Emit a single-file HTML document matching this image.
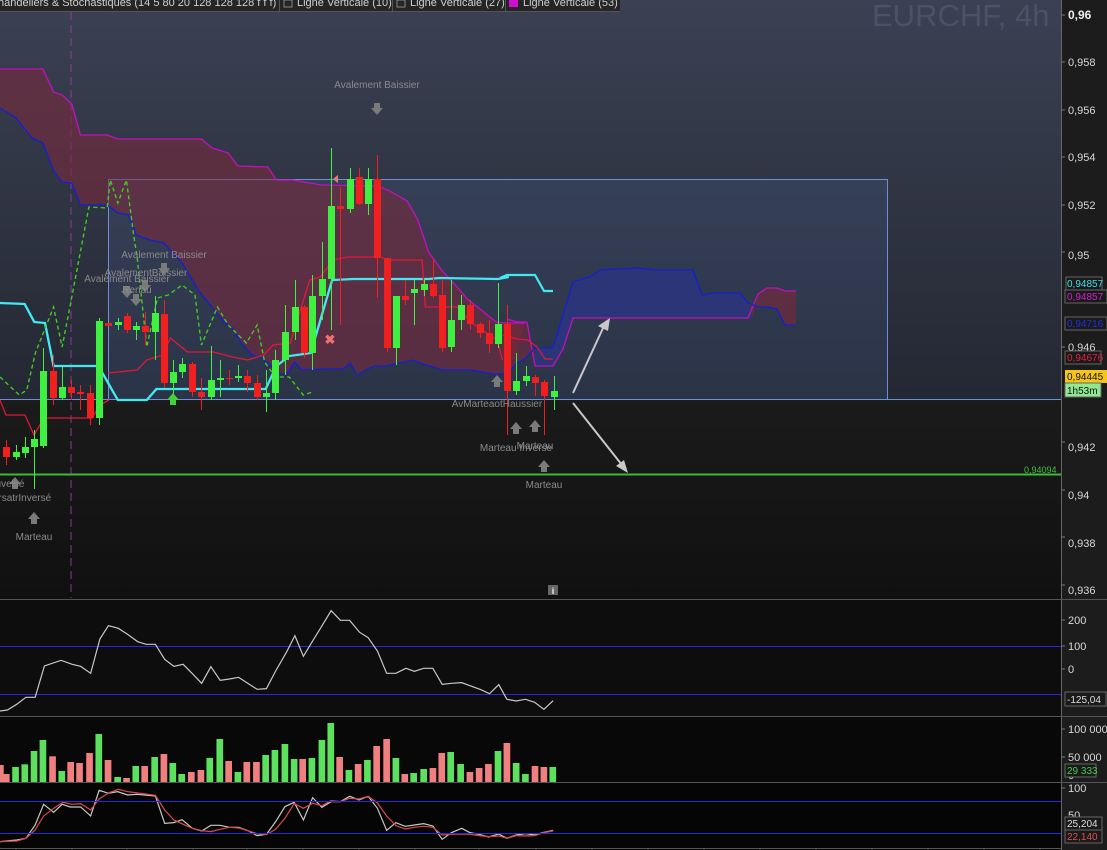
<!DOCTYPE html>
<html><head><meta charset="utf-8"><style>
html,body{margin:0;padding:0;background:#111;}
body{width:1107px;height:850px;overflow:hidden;position:relative;font-family:"Liberation Sans",Arial,sans-serif;}
svg{position:absolute;left:0;top:0}
text{font-family:"Liberation Sans",Arial,sans-serif}
</style></head><body>
<svg width="1107" height="850" viewBox="0 0 1107 850" xmlns="http://www.w3.org/2000/svg">
<defs>
<linearGradient id="bgTop" x1="0" y1="0" x2="0" y2="1">
<stop offset="0" stop-color="#3b4153"/><stop offset="1" stop-color="#242833"/></linearGradient>
<linearGradient id="bgBot" x1="0" y1="0" x2="0" y2="1">
<stop offset="0" stop-color="#1b1b1b"/><stop offset="1" stop-color="#101010"/></linearGradient>
</defs>
<rect x="0" y="0" width="1061" height="399" fill="url(#bgTop)"/>
<rect x="0" y="399" width="1061" height="200" fill="url(#bgBot)"/>
<rect x="0" y="599" width="1061" height="117" fill="#0d0d0d"/>
<rect x="0" y="716" width="1061" height="66" fill="#080808"/>
<rect x="0" y="782" width="1061" height="68" fill="#050505"/>
<rect x="1061" y="0" width="46" height="850" fill="#1c1c1c"/>
<line x1="1061.5" y1="0" x2="1061.5" y2="850" stroke="#666"/>
<text x="872" y="26" font-size="31" fill="#4c5265">EURCHF, 4h</text>
<rect x="108.5" y="179.5" width="779" height="220" fill="rgba(90,130,210,0.13)" stroke="#6d8fd8"/>
<line x1="0" y1="399.5" x2="1061" y2="399.5" stroke="#6d8fd8"/>
<line x1="71" y1="12" x2="71" y2="598" stroke="#9a3aa8" stroke-width="0.9" stroke-dasharray="8,5"/>

<g transform="scale(1.0714,1)">
<polygon fill="rgba(125,40,60,0.55)" points="0,69 40,69 50,92 58,95 67,104 75,135 100,135 110,139 188,139 198,148 213,153 222,166 250,167 258,180 273,180 300,185 352,186 362,190 380,201 390,220 400,252 412,270 425,285 437,300 447,308 463,322 470,323 490,323 475,374 460,374 440,370 413,370 395,364 385,360 360,366 350,366 345,368 333,375 327,363 320,369 300,369 282,370 275,362 268,374 262,374 257,370 245,358 235,355 225,343 217,328 210,323 200,310 185,290 170,263 153,243 140,240 127,235 120,215 110,213 100,205 83,205 75,205 67,183 58,182 50,171 40,143 30,138 15,118 0,108"/>
</g>
<polygon fill="rgba(125,40,60,0.55)" points="507,319 517,322 527,322 535,366 535,348 525,359 517,363 507,374"/>
<polygon fill="#2c3578" points="535,348 553,348 573,282 590,277 600,270 637,268 657,270 693,270 702,295 713,293 740,293 748,303 752,318 573,318 563,349 553,366 535,366"/>
<polygon fill="rgba(125,40,60,0.6)" points="752,318 758,294 767,288 777,288 785,291 796,291 796,325 785,325 777,309 767,307 758,307 750,304"/>

<g transform="scale(1.0714,1)" fill="none" stroke-width="1.3">
<polyline stroke="#c010c0" points="0,69 40,69 50,92 58,95 67,104 75,135 100,135 110,139 188,139 198,148 213,153 222,166 250,167 258,180 273,180 300,185 352,186 362,190 380,201 390,220 400,252 412,270 425,285 437,300 447,308 463,322 470,323 490,323"/>
<polyline stroke="#1420d0" points="0,108 15,118 30,138 40,143 50,171 58,182 67,183 75,205 83,205 100,205 110,213 120,215 127,235 140,240 153,243 170,263 185,290 200,310 210,323 217,328 225,343 235,355 245,358 257,370 262,374 268,374 275,362 282,370 300,369 320,369 327,363 333,375 345,368 350,366 360,366 385,360 395,364 413,370 440,370 460,374 475,374"/>
<polyline stroke="#43e8f0" stroke-width="2.2" points="0,303 23,304 32,322 42,323 50,366 92,366 103,387 110,400 137,400 146,389 248,389 258,366 270,356 290,353 310,280 330,279 400,279 410,278 465,279 475,277"/>
<polyline stroke="#e01838" points="101,373 110,372 128,370 137,360 152,355 159,338 175,352 199,352 217,357 231,360 246,355 255,345 271,343 289,280 299,277 311,260 324,257 355,257 361,260 394,260 397,307 427,307 439,322 464,340 469,360"/>
<polyline stroke="#44cc22" stroke-dasharray="4,3" points="0,377 18,395 25,390 33,353 50,307 58,347 67,297 83,207 100,208 103,180 110,203 118,180 125,237 128,257 137,347 147,298 157,295 170,285 182,295 188,345 203,307 213,325 230,343 240,325 247,362 257,377 270,377 283,395 292,392"/>
</g>
<polyline fill="none" stroke="#e01838" stroke-width="1.3" points="0,400 6,415 25,415 34,435 44,418 92,418 100,405 109,400"/>
<g fill="none" stroke-width="1.3">
<polyline stroke="#c010c0" points="507,319 517,322 527,322 535,366 553,366 563,349 573,318 748,318 758,294 767,288 777,288 785,291 796,291"/>
<polyline stroke="#1420d0" points="500,374 507,374 517,363 525,359 535,348 553,348 573,282 590,277 600,270 637,268 657,270 693,270 702,295 713,293 740,293 748,303 758,307 767,307 777,309 785,325 796,325"/>
<polyline stroke="#43e8f0" stroke-width="2.2" points="500,278 507,275 535,275 544,291 553,291"/>
<polyline stroke="#e01838" points="503,335 517,339 528,340 537,347 545,359 553,359"/>
</g>

<line x1="0" y1="474.5" x2="1061" y2="474.5" stroke="#3cb83c" stroke-width="2"/>
<text x="1024" y="473" font-size="9" fill="#40c040">0,94094</text>

<g stroke-width="1">
<line x1="6.5" y1="440" x2="6.5" y2="465" stroke="#f02020"/><rect x="3" y="447" width="7" height="10" fill="#f02020"/>
<line x1="16.5" y1="445" x2="16.5" y2="460" stroke="#40f040"/><rect x="13" y="452" width="7" height="5" fill="#40f040"/>
<line x1="25.5" y1="437" x2="25.5" y2="458" stroke="#40f040"/><rect x="22" y="447" width="7" height="6" fill="#40f040"/>
<line x1="34.5" y1="430" x2="34.5" y2="489" stroke="#40f040"/><rect x="31" y="439" width="7" height="8" fill="#40f040"/>
<line x1="43.5" y1="348" x2="43.5" y2="448" stroke="#40f040"/><rect x="40" y="371" width="7" height="75" fill="#40f040"/>
<line x1="53.5" y1="355" x2="53.5" y2="405" stroke="#f02020"/><rect x="50" y="371" width="7" height="27" fill="#f02020"/>
<line x1="62.5" y1="367" x2="62.5" y2="400" stroke="#40f040"/><rect x="59" y="387" width="7" height="11" fill="#40f040"/>
<line x1="71.5" y1="380" x2="71.5" y2="400" stroke="#f02020"/><rect x="68" y="387" width="7" height="6" fill="#f02020"/>
<line x1="80.5" y1="385" x2="80.5" y2="410" stroke="#f02020"/><rect x="77" y="392" width="7" height="2" fill="#f02020"/>
<line x1="90.5" y1="385" x2="90.5" y2="425" stroke="#f02020"/><rect x="87" y="393" width="7" height="25" fill="#f02020"/>
<line x1="99.5" y1="318" x2="99.5" y2="425" stroke="#40f040"/><rect x="96" y="321" width="7" height="97" fill="#40f040"/>
<rect x="105" y="323" width="7" height="3" fill="#f02020"/>
<line x1="118.5" y1="318" x2="118.5" y2="330" stroke="#40f040"/><rect x="115" y="322" width="7" height="3" fill="#40f040"/>
<line x1="127.5" y1="313" x2="127.5" y2="333" stroke="#f02020"/><rect x="124" y="316" width="7" height="14" fill="#f02020"/>
<line x1="136.5" y1="322" x2="136.5" y2="340" stroke="#40f040"/><rect x="133" y="326" width="7" height="4" fill="#40f040"/>
<line x1="145.5" y1="312" x2="145.5" y2="345" stroke="#f02020"/><rect x="142" y="326" width="7" height="6" fill="#f02020"/>
<line x1="155.5" y1="296" x2="155.5" y2="360" stroke="#40f040"/><rect x="152" y="313" width="7" height="19" fill="#40f040"/>
<line x1="164.5" y1="300" x2="164.5" y2="388" stroke="#f02020"/><rect x="161" y="314" width="7" height="69" fill="#f02020"/>
<line x1="173.5" y1="360" x2="173.5" y2="395" stroke="#40f040"/><rect x="170" y="372" width="7" height="11" fill="#40f040"/>
<line x1="182.5" y1="358" x2="182.5" y2="378" stroke="#40f040"/><rect x="179" y="364" width="7" height="8" fill="#40f040"/>
<line x1="192.5" y1="362" x2="192.5" y2="397" stroke="#f02020"/><rect x="189" y="364" width="7" height="28" fill="#f02020"/>
<line x1="201.5" y1="378" x2="201.5" y2="410" stroke="#f02020"/><rect x="198" y="392" width="7" height="5" fill="#f02020"/>
<line x1="211.5" y1="346" x2="211.5" y2="400" stroke="#40f040"/><rect x="208" y="380" width="7" height="17" fill="#40f040"/>
<line x1="220.5" y1="360" x2="220.5" y2="397" stroke="#40f040"/><rect x="217" y="378" width="7" height="2" fill="#40f040"/>
<line x1="229.5" y1="370" x2="229.5" y2="385" stroke="#f02020"/><rect x="226" y="378" width="7" height="1" fill="#f02020"/>
<line x1="238.5" y1="365" x2="238.5" y2="382" stroke="#40f040"/><rect x="235" y="376" width="7" height="2" fill="#40f040"/>
<line x1="247.5" y1="370" x2="247.5" y2="392" stroke="#f02020"/><rect x="244" y="376" width="7" height="7" fill="#f02020"/>
<line x1="257.5" y1="375" x2="257.5" y2="400" stroke="#f02020"/><rect x="254" y="383" width="7" height="14" fill="#f02020"/>
<line x1="266.5" y1="370" x2="266.5" y2="412" stroke="#40f040"/><rect x="263" y="393" width="7" height="4" fill="#40f040"/>
<line x1="275.5" y1="350" x2="275.5" y2="400" stroke="#40f040"/><rect x="272" y="360" width="7" height="33" fill="#40f040"/>
<line x1="285.5" y1="305" x2="285.5" y2="375" stroke="#40f040"/><rect x="282" y="332" width="7" height="28" fill="#40f040"/>
<line x1="295.5" y1="280" x2="295.5" y2="340" stroke="#40f040"/><rect x="292" y="307" width="7" height="25" fill="#40f040"/>
<line x1="304.5" y1="305" x2="304.5" y2="358" stroke="#f02020"/><rect x="301" y="307" width="7" height="46" fill="#f02020"/>
<line x1="312.5" y1="275" x2="312.5" y2="370" stroke="#40f040"/><rect x="309" y="296" width="7" height="57" fill="#40f040"/>
<line x1="322.5" y1="242" x2="322.5" y2="320" stroke="#40f040"/><rect x="319" y="279" width="7" height="17" fill="#40f040"/>
<line x1="331.5" y1="148" x2="331.5" y2="330" stroke="#40f040"/><rect x="328" y="206" width="7" height="73" fill="#40f040"/>
<line x1="340.5" y1="187" x2="340.5" y2="325" stroke="#f02020"/><rect x="337" y="206" width="7" height="3" fill="#f02020"/>
<line x1="350.5" y1="168" x2="350.5" y2="213" stroke="#40f040"/><rect x="347" y="179" width="7" height="30" fill="#40f040"/>
<line x1="359.5" y1="168" x2="359.5" y2="205" stroke="#f02020"/><rect x="356" y="177" width="7" height="27" fill="#f02020"/>
<line x1="368.5" y1="168" x2="368.5" y2="215" stroke="#40f040"/><rect x="365" y="179" width="7" height="25" fill="#40f040"/>
<line x1="377.5" y1="155" x2="377.5" y2="298" stroke="#f02020"/><rect x="374" y="179" width="7" height="79" fill="#f02020"/>
<line x1="387.5" y1="258" x2="387.5" y2="352" stroke="#f02020"/><rect x="384" y="258" width="7" height="90" fill="#f02020"/>
<line x1="396.5" y1="296" x2="396.5" y2="365" stroke="#40f040"/><rect x="393" y="296" width="7" height="52" fill="#40f040"/>
<line x1="405.5" y1="280" x2="405.5" y2="305" stroke="#f02020"/><rect x="402" y="296" width="7" height="4" fill="#f02020"/>
<line x1="414.5" y1="280" x2="414.5" y2="325" stroke="#40f040"/><rect x="411" y="289" width="7" height="4" fill="#40f040"/>
<line x1="424.5" y1="278" x2="424.5" y2="296" stroke="#40f040"/><rect x="421" y="284" width="7" height="6" fill="#40f040"/>
<line x1="433.5" y1="258" x2="433.5" y2="298" stroke="#f02020"/><rect x="430" y="284" width="7" height="12" fill="#f02020"/>
<line x1="442.5" y1="280" x2="442.5" y2="352" stroke="#f02020"/><rect x="439" y="295" width="7" height="53" fill="#f02020"/>
<line x1="451.5" y1="280" x2="451.5" y2="352" stroke="#40f040"/><rect x="448" y="320" width="7" height="27" fill="#40f040"/>
<line x1="461.5" y1="295" x2="461.5" y2="330" stroke="#40f040"/><rect x="458" y="305" width="7" height="15" fill="#40f040"/>
<line x1="470.5" y1="300" x2="470.5" y2="330" stroke="#f02020"/><rect x="467" y="305" width="7" height="19" fill="#f02020"/>
<line x1="480.5" y1="322" x2="480.5" y2="338" stroke="#f02020"/><rect x="477" y="324" width="7" height="9" fill="#f02020"/>
<line x1="489.5" y1="320" x2="489.5" y2="353" stroke="#f02020"/><rect x="486" y="333" width="7" height="11" fill="#f02020"/>
<line x1="498.5" y1="283" x2="498.5" y2="348" stroke="#40f040"/><rect x="495" y="324" width="7" height="20" fill="#40f040"/>
<line x1="507.5" y1="305" x2="507.5" y2="435" stroke="#f02020"/><rect x="504" y="324" width="7" height="67" fill="#f02020"/>
<line x1="516.5" y1="353" x2="516.5" y2="395" stroke="#40f040"/><rect x="513" y="381" width="7" height="10" fill="#40f040"/>
<line x1="526.5" y1="366" x2="526.5" y2="386" stroke="#40f040"/><rect x="523" y="376" width="7" height="5" fill="#40f040"/>
<line x1="535.5" y1="375" x2="535.5" y2="396" stroke="#f02020"/><rect x="532" y="377" width="7" height="6" fill="#f02020"/>
<line x1="544.5" y1="380" x2="544.5" y2="435" stroke="#f02020"/><rect x="541" y="382" width="7" height="14" fill="#f02020"/>
<line x1="554.5" y1="376" x2="554.5" y2="410" stroke="#40f040"/><rect x="551" y="391" width="7" height="6" fill="#40f040"/>
</g>

<text x="330" y="344" font-size="13" font-weight="bold" fill="#f07070" text-anchor="middle">✖</text>
<polygon points="333,179 338,175 338,183" fill="#f07878"/>
<g fill="#7a7a7a">
<path d="M374,103h6v5h3l-6,7l-6,-7h3z"/>
<path d="M161,263h6v5h3l-6,7l-6,-7h3z"/>
<path d="M142,280h6v5h3l-6,7l-6,-7h3z"/>
<path d="M124,286h6v5h3l-6,7l-6,-7h3z"/>
<path d="M133,294h6v5h3l-6,7l-6,-7h3z"/>
<path d="M494,387h6v-5h3l-6,-7l-6,7h3z"/>
<path d="M513,434h6v-5h3l-6,-7l-6,7h3z"/>
<path d="M532,432h6v-5h3l-6,-7l-6,7h3z"/>
<path d="M541,472h6v-5h3l-6,-7l-6,7h3z"/>
<path d="M12,489h6v-5h3l-6,-7l-6,7h3z"/>
<path d="M31,524h6v-5h3l-6,-7l-6,7h3z"/>
</g>
<path d="M170,405h6v-5h3l-6,-7l-6,7h3z" fill="#40d040"/>
<g font-size="10" fill="#8a8a8a" text-anchor="middle">
<text x="377" y="88">Avalement Baissier</text>
<text x="164" y="258">Avalement Baissier</text>
<text x="146" y="276">AvalementBaissier</text>
<text x="127" y="282">Avalement Baissier</text>
<text x="137" y="293">Renau</text>
<text x="497" y="407">AvMarteaotHaussier</text>
<text x="516" y="451">Marteau Inverse</text>
<text x="535" y="449">Marteau</text>
<text x="544" y="488">Marteau</text>
<text x="10" y="487">uvelsé</text>
<text x="22" y="501">érsatrInversé</text>
<text x="34" y="540">Marteau</text>
</g>
<rect x="548" y="585" width="10" height="10" fill="#666"/>
<text x="553" y="594" font-size="9" font-weight="bold" fill="#eee" text-anchor="middle">i</text>
<g stroke="#c8c8c8" stroke-width="2" fill="#c8c8c8">
<line x1="573" y1="393" x2="604" y2="326"/>
<polygon points="610,318 598,326 608,331" stroke="none"/>
<line x1="573" y1="403" x2="622" y2="465"/>
<polygon points="628,473 616,466 624,460" stroke="none"/>
</g>

<line x1="0" y1="599.5" x2="1107" y2="599.5" stroke="#555"/>
<line x1="0" y1="716.5" x2="1107" y2="716.5" stroke="#555"/>
<line x1="0" y1="782.5" x2="1107" y2="782.5" stroke="#555"/>
<line x1="0" y1="848.5" x2="1061" y2="848.5" stroke="#555"/>

<line x1="0" y1="646.5" x2="1061" y2="646.5" stroke="#2828e0"/>
<line x1="0" y1="694.5" x2="1061" y2="694.5" stroke="#2828e0"/>
<g transform="translate(0,595) scale(0.37,0.3333)">
<polyline fill="none" stroke="#c8c8c8" stroke-width="1.2" vector-effect="non-scaling-stroke" points="0,348 20,345 45,328 70,307 95,307 120,213 165,196 195,208 218,214 245,235 270,132 293,92 320,100 345,118 372,140 395,148 420,148 445,193 470,214 495,208 520,236 545,265 570,215 595,256 620,252 645,247 670,265 695,283 720,281 745,228 775,170 797,122 820,184 845,138 870,93 895,47 920,76 945,76 972,112 995,128 1020,168 1045,235 1070,235 1097,220 1120,229 1145,220 1170,220 1195,268 1220,265 1248,263 1270,272 1300,284 1323,296 1348,269 1370,313 1395,318 1420,313 1445,322 1470,343 1495,317"/>
<g>
<rect x="-8" y="510" width="18" height="51" fill="#f08080"/>
<rect x="8" y="537" width="18" height="24" fill="#f08080"/>
<rect x="33" y="516" width="18" height="45" fill="#5de05d"/>
<rect x="58" y="508" width="18" height="53" fill="#5de05d"/>
<rect x="83" y="468" width="18" height="93" fill="#5de05d"/>
<rect x="107" y="435" width="18" height="126" fill="#5de05d"/>
<rect x="133" y="484" width="18" height="77" fill="#f08080"/>
<rect x="158" y="528" width="18" height="33" fill="#5de05d"/>
<rect x="182" y="501" width="18" height="60" fill="#f08080"/>
<rect x="206" y="504" width="18" height="57" fill="#f08080"/>
<rect x="233" y="474" width="18" height="87" fill="#f08080"/>
<rect x="258" y="417" width="18" height="144" fill="#5de05d"/>
<rect x="283" y="495" width="18" height="66" fill="#f08080"/>
<rect x="309" y="546" width="18" height="15" fill="#5de05d"/>
<rect x="333" y="549" width="18" height="12" fill="#f08080"/>
<rect x="358" y="513" width="18" height="48" fill="#5de05d"/>
<rect x="382" y="513" width="18" height="48" fill="#f08080"/>
<rect x="409" y="486" width="18" height="75" fill="#5de05d"/>
<rect x="434" y="477" width="18" height="84" fill="#f08080"/>
<rect x="458" y="504" width="18" height="57" fill="#5de05d"/>
<rect x="482" y="537" width="18" height="24" fill="#5de05d"/>
<rect x="508" y="531" width="18" height="30" fill="#f08080"/>
<rect x="534" y="525" width="18" height="36" fill="#f08080"/>
<rect x="558" y="489" width="18" height="72" fill="#5de05d"/>
<rect x="585" y="432" width="18" height="129" fill="#5de05d"/>
<rect x="609" y="498" width="18" height="63" fill="#f08080"/>
<rect x="634" y="531" width="18" height="30" fill="#5de05d"/>
<rect x="658" y="501" width="18" height="60" fill="#f08080"/>
<rect x="684" y="501" width="18" height="60" fill="#f08080"/>
<rect x="709" y="480" width="18" height="81" fill="#5de05d"/>
<rect x="734" y="465" width="18" height="96" fill="#5de05d"/>
<rect x="761" y="447" width="18" height="114" fill="#5de05d"/>
<rect x="786" y="492" width="18" height="69" fill="#5de05d"/>
<rect x="809" y="492" width="18" height="69" fill="#f08080"/>
<rect x="834" y="489" width="18" height="72" fill="#5de05d"/>
<rect x="861" y="435" width="18" height="126" fill="#5de05d"/>
<rect x="885" y="384" width="18" height="177" fill="#5de05d"/>
<rect x="909" y="486" width="18" height="75" fill="#f08080"/>
<rect x="934" y="525" width="18" height="36" fill="#5de05d"/>
<rect x="959" y="507" width="18" height="54" fill="#f08080"/>
<rect x="984" y="495" width="18" height="66" fill="#5de05d"/>
<rect x="1009" y="453" width="18" height="108" fill="#f08080"/>
<rect x="1036" y="432" width="18" height="129" fill="#f08080"/>
<rect x="1061" y="489" width="18" height="72" fill="#5de05d"/>
<rect x="1085" y="537" width="18" height="24" fill="#f08080"/>
<rect x="1109" y="534" width="18" height="27" fill="#5de05d"/>
<rect x="1136" y="522" width="18" height="39" fill="#5de05d"/>
<rect x="1161" y="519" width="18" height="42" fill="#f08080"/>
<rect x="1185" y="474" width="18" height="87" fill="#f08080"/>
<rect x="1209" y="471" width="18" height="90" fill="#5de05d"/>
<rect x="1236" y="507" width="18" height="54" fill="#5de05d"/>
<rect x="1261" y="531" width="18" height="30" fill="#f08080"/>
<rect x="1286" y="519" width="18" height="42" fill="#f08080"/>
<rect x="1311" y="507" width="18" height="54" fill="#f08080"/>
<rect x="1337" y="468" width="18" height="93" fill="#5de05d"/>
<rect x="1361" y="444" width="18" height="117" fill="#f08080"/>
<rect x="1386" y="504" width="18" height="57" fill="#5de05d"/>
<rect x="1411" y="537" width="18" height="24" fill="#5de05d"/>
<rect x="1437" y="513" width="18" height="48" fill="#f08080"/>
<rect x="1461" y="516" width="18" height="45" fill="#f08080"/>
<rect x="1485" y="516" width="18" height="45" fill="#5de05d"/>
</g>
<polyline fill="none" stroke="#c8c8c8" stroke-width="1.2" vector-effect="non-scaling-stroke" points="0,740 45,735 70,730 95,690 118,628 145,652 168,628 190,636 218,636 245,663 268,586 293,595 318,590 345,600 370,598 420,603 445,685 470,683 492,674 520,700 545,708 570,691 595,691 620,697 645,697 670,707 695,722 720,718 745,680 770,635 795,622 820,675 845,608 870,637 895,620 920,620 945,604 970,615 995,604 1020,640 1045,706 1070,683 1095,694 1120,690 1145,686 1170,693 1195,733 1220,713 1248,700 1270,713 1295,718 1320,726 1348,717 1370,730 1395,720 1420,716 1445,720 1470,712 1495,706"/>
<polyline fill="none" stroke="#d84a4a" stroke-width="1.2" vector-effect="non-scaling-stroke" points="0,740 45,738 70,730 95,705 118,663 145,640 170,622 195,628 218,626 245,645 268,612 295,593 320,583 345,590 420,601 445,645 470,675 495,688 520,700 545,707 570,710 595,703 620,697 645,699 670,707 695,716 720,719 745,703 770,670 795,626 820,640 845,625 870,632 895,617 920,620 945,610 970,612 995,604 1020,624 1045,663 1070,692 1095,702 1120,697 1145,694 1170,697 1195,720 1220,718 1248,717 1270,718 1295,722 1320,725 1348,723 1370,730 1395,722 1420,723 1445,722 1470,713 1495,708"/>
</g>
<line x1="0" y1="801.5" x2="1061" y2="801.5" stroke="#2828e0"/>
<line x1="0" y1="833.5" x2="1061" y2="833.5" stroke="#2828e0"/>

<rect x="0" y="0" width="620" height="11" fill="#252525"/>
<line x1="0" y1="11.5" x2="620" y2="11.5" stroke="#555"/>
<g font-size="11" fill="#cfcfcf">
<text x="-2" y="6">handeliers &amp; Stochastiques (14 5 80 20 128 128 128 f f f)</text>
<line x1="279.5" y1="0" x2="279.5" y2="11" stroke="#555"/>
<rect x="284" y="0" width="8" height="7" fill="none" stroke="#888"/>
<text x="297" y="6">Ligne Verticale (10)</text>
<line x1="392.5" y1="0" x2="392.5" y2="11" stroke="#555"/>
<rect x="397" y="0" width="8" height="7" fill="none" stroke="#888"/>
<text x="410" y="6">Ligne Verticale (27)</text>
<line x1="505.5" y1="0" x2="505.5" y2="11" stroke="#555"/>
<rect x="509" y="0" width="9" height="7" fill="#d010d0"/>
<text x="523" y="6">Ligne Verticale (53)</text>
</g>

<g font-size="11" fill="#d8d8d8">
<g stroke="#777"><line x1="1061" y1="15" x2="1065" y2="15"/><line x1="1061" y1="62" x2="1065" y2="62"/><line x1="1061" y1="110" x2="1065" y2="110"/><line x1="1061" y1="157" x2="1065" y2="157"/><line x1="1061" y1="205" x2="1065" y2="205"/><line x1="1061" y1="252" x2="1065" y2="252"/><line x1="1061" y1="347" x2="1065" y2="347"/><line x1="1061" y1="442" x2="1065" y2="442"/><line x1="1061" y1="490" x2="1065" y2="490"/><line x1="1061" y1="537" x2="1065" y2="537"/><line x1="1061" y1="585" x2="1065" y2="585"/>
<line x1="1061" y1="620" x2="1065" y2="620"/><line x1="1061" y1="646" x2="1065" y2="646"/><line x1="1061" y1="669" x2="1065" y2="669"/><line x1="1061" y1="729" x2="1065" y2="729"/><line x1="1061" y1="757" x2="1065" y2="757"/><line x1="1061" y1="788" x2="1065" y2="788"/></g>
<text x="1068" y="19" font-weight="bold" font-size="12" fill="#eee">0,96</text>
<text x="1068" y="66">0,958</text>
<text x="1068" y="114">0,956</text>
<text x="1068" y="161">0,954</text>
<text x="1068" y="209">0,952</text>
<text x="1068" y="259">0,95</text>
<text x="1068" y="351">0,946</text>
<text x="1068" y="451">0,942</text>
<text x="1068" y="499">0,94</text>
<text x="1068" y="547">0,938</text>
<text x="1068" y="594">0,936</text>
<text x="1068" y="624">200</text>
<text x="1068" y="650">100</text>
<text x="1068" y="673">0</text>
<text x="1068" y="733">100 000</text>
<text x="1068" y="761">50 000</text>
<text x="1068" y="779">0</text>
<text x="1068" y="792">100</text>
<text x="1068" y="819">50</text>
</g>
<g font-size="10">
<rect x="1066" y="277" width="36" height="13" fill="#1a1a1a" stroke="#666"/><text x="1067" y="287" fill="#40e0e8">0,94857</text>
<rect x="1065" y="290" width="42" height="13" fill="#1a1a1a" stroke="#666"/><text x="1067" y="300" fill="#d020d0">0,94857</text>
<rect x="1065" y="317" width="42" height="13" fill="#1a1a1a" stroke="#666"/><text x="1067" y="327" fill="#2030e0">0,94716</text>
<rect x="1065" y="351" width="36" height="13" fill="#1a1a1a" stroke="#666"/><text x="1067" y="361" fill="#e02040">0,94676</text>
<rect x="1065" y="370" width="42" height="13" fill="#f5c518"/><text x="1067" y="380" fill="#111">0,94445</text>
<rect x="1065" y="383" width="36" height="14" fill="#90e890" stroke="#666"/><text x="1067" y="394" fill="#111">1h53m</text>
<rect x="1065" y="692" width="41" height="14" fill="#1a1a1a" stroke="#666"/><text x="1067" y="703" fill="#ddd">-125,04</text>
<rect x="1065" y="764" width="31" height="13" fill="#1a1a1a" stroke="#666"/><text x="1067" y="774" fill="#40d040">29 333</text>
<rect x="1065" y="817" width="37" height="13" fill="#1a1a1a" stroke="#666"/><text x="1067" y="827" fill="#ddd">25,204</text>
<rect x="1065" y="830" width="37" height="13" fill="#1a1a1a" stroke="#666"/><text x="1067" y="840" fill="#e05050">22,140</text>
</g>
<g stroke="#555"><line x1="16" y1="848" x2="16" y2="850"/><line x1="72" y1="848" x2="72" y2="850"/><line x1="127" y1="848" x2="127" y2="850"/><line x1="193" y1="848" x2="193" y2="850"/><line x1="247" y1="848" x2="247" y2="850"/><line x1="303" y1="848" x2="303" y2="850"/><line x1="359" y1="848" x2="359" y2="850"/><line x1="415" y1="848" x2="415" y2="850"/><line x1="479" y1="848" x2="479" y2="850"/><line x1="536" y1="848" x2="536" y2="850"/><line x1="592" y1="848" x2="592" y2="850"/><line x1="648" y1="848" x2="648" y2="850"/><line x1="704" y1="848" x2="704" y2="850"/><line x1="760" y1="848" x2="760" y2="850"/><line x1="816" y1="848" x2="816" y2="850"/><line x1="872" y1="848" x2="872" y2="850"/><line x1="928" y1="848" x2="928" y2="850"/><line x1="984" y1="848" x2="984" y2="850"/><line x1="1040" y1="848" x2="1040" y2="850"/></g>
</svg>
</body></html>
